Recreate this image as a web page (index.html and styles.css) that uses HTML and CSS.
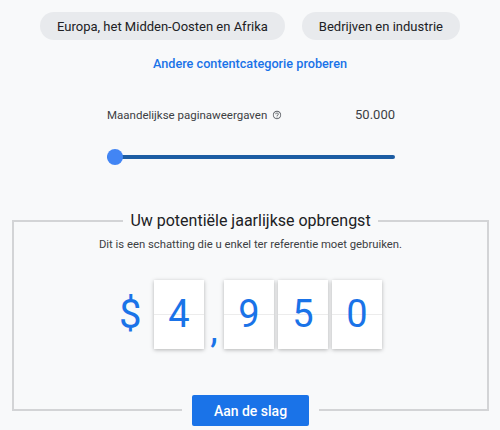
FILE: index.html
```html
<!DOCTYPE html>
<html lang="nl">
<head>
    <meta charset="UTF-8">
    <meta name="viewport" content="width=device-width, initial-scale=1.0">
    <title>Opbrengstcalculator</title>
    <link rel="stylesheet" href="styles.css">
</head>
<body>
    <div class="chips">
        <button class="chip">Europa, het Midden-Oosten en Afrika</button>
        <button class="chip">Bedrijven en industrie</button>
    </div>
    <a class="link" href="#">Andere contentcategorie proberen</a>

    <div class="views">
        <div class="views-head">
            <span class="views-label">Maandelijkse paginaweergaven
                <svg class="help" viewBox="0 0 24 24" width="10" height="10"><path d="M11 18h2v-2h-2v2zm1-16C6.48 2 2 6.48 2 12s4.48 10 10 10 10-4.48 10-10S17.52 2 12 2zm0 18c-4.41 0-8-3.59-8-8s3.59-8 8-8 8 3.59 8 8-3.59 8-8 8zm0-14c-2.21 0-4 1.79-4 4h2c0-1.1.9-2 2-2s2 .9 2 2c0 2-3 1.75-3 5h2c0-2.25 3-2.5 3-5 0-2.21-1.79-4-4-4z"/></svg>
            </span>
            <span class="views-value">50.000</span>
        </div>
        <div class="slider">
            <div class="track"></div>
            <div class="thumb"></div>
        </div>
    </div>

    <div class="result">
        <div class="result-head">
            <span class="result-title">Uw potentiële jaarlijkse opbrengst</span>
        </div>
        <p class="result-note">Dit is een schatting die u enkel ter referentie moet gebruiken.</p>
        <div class="counter">
            <span class="dollar">$</span>
            <span class="digit">4</span>
            <span class="comma">,</span>
            <span class="digit">9</span>
            <span class="digit">5</span>
            <span class="digit">0</span>
        </div>
        <div class="cta">
            <span class="cta-wrap"><button class="start">Aan de slag</button></span>
        </div>
    </div>
</body>
</html>
```

FILE: styles.css
```css
body {
    margin: 0;
    padding-bottom: 30px;
    background-color: #f8f9fa;
    font-family: Roboto, "Noto Sans", sans-serif;
    color: #202124;
}
.chips {
    display: flex;
    justify-content: center;
    gap: 17px;
    padding-top: 12px;
}
.chip {
    height: 28px;
    padding: 0 17px;
    border: none;
    border-radius: 14px;
    background-color: #e8eaed;
    color: #202124;
    font-family: inherit;
    font-size: 13px;
}
.link {
    display: block;
    margin-top: 16px;
    text-align: center;
    color: #1a73e8;
    font-size: 12.7px;
    font-weight: 500;
    text-decoration: none;
}
.views {
    width: 288px;
    margin: 36px 0 0 107px;
}
.views-head {
    display: flex;
    justify-content: space-between;
    align-items: center;
    font-size: 11.5px;
    color: #3c4043;
}
.views-label {
    display: flex;
    align-items: center;
    gap: 5px;
}
.help {
    fill: #5f6368;
}
.views-value {
    font-size: 13px;
    color: #3c4043;
}
.slider {
    position: relative;
    height: 16px;
    margin-top: 27px;
}
.track {
    position: absolute;
    left: 0;
    right: 0;
    top: 6px;
    height: 4px;
    border-radius: 2px;
    background-color: #1d5da3;
}
.thumb {
    position: absolute;
    left: 0;
    top: 0;
    width: 16px;
    height: 16px;
    border-radius: 50%;
    background-color: #4285f4;
}
.result {
    margin: 55px 11px 0 12px;
    border: 2px solid #d3d4d6;
}
.result-head {
    display: flex;
    justify-content: center;
    margin-top: -12px;
}
.result-title {
    padding: 0 7px;
    background-color: #f8f9fa;
    font-size: 16px;
    line-height: 22px;
    color: #202124;
}
.result-note {
    margin: 6px 0 0;
    text-align: center;
    font-size: 11.3px;
    line-height: 14px;
    color: #3c4043;
}
.counter {
    display: flex;
    justify-content: center;
    align-items: center;
    margin-top: 27px;
}
.dollar {
    width: 35px;
    font-size: 40px;
    color: #1a73e8;
}
.digit {
    width: 50px;
    height: 69px;
    line-height: 69px;
    margin-left: 4px;
    text-align: center;
    font-size: 38px;
    color: #1a73e8;
    background: linear-gradient(#fff 49%, #ececec 49%, #ececec 51%, #fff 51%);
    box-shadow: 0 1px 4px rgba(0, 0, 0, 0.28);
}
.dollar + .digit,
.comma + .digit {
    margin-left: 0;
}
.comma {
    width: 20px;
    padding-top: 30px;
    text-align: center;
    font-size: 38px;
    line-height: 40px;
    color: #1a73e8;
}
.cta {
    display: flex;
    justify-content: center;
    margin-top: 46px;
    margin-bottom: -17px;
}
.cta-wrap {
    padding: 0 10px;
    background-color: #f8f9fa;
}
.start {
    display: block;
    height: 31px;
    padding: 0 22px;
    border: none;
    border-radius: 2px;
    background-color: #1a73e8;
    color: #fff;
    font-family: inherit;
    font-size: 14px;
    font-weight: 500;
}
```
